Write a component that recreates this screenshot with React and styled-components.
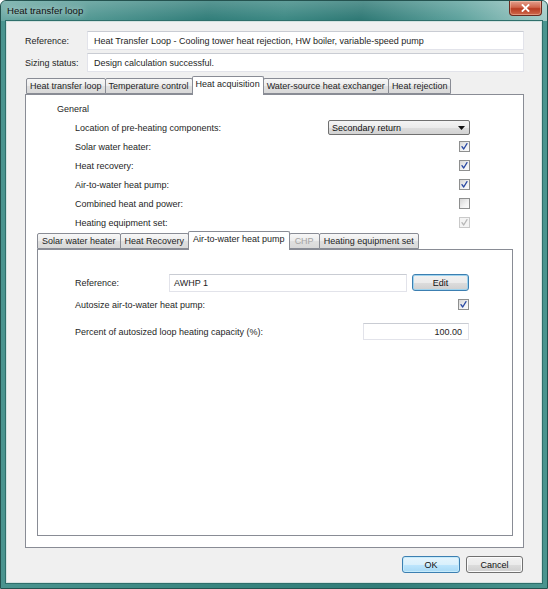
import styled, { createGlobalStyle } from 'styled-components'

const GlobalStyle = createGlobalStyle`
  html, body {
    margin: 0;
    padding: 0;
    background: #ffffff;
  }
  body {
    font-family: 'Liberation Sans', Arial, sans-serif;
    font-size: 9px;
    color: #1e1e1e;
  }
  * {
    box-sizing: border-box;
  }
`

const mainTabs = [
  { label: 'Heat transfer loop' },
  { label: 'Temperature control' },
  { label: 'Heat acquisition', active: true },
  { label: 'Water-source heat exchanger' },
  { label: 'Heat rejection' },
]

const subTabs = [
  { label: 'Solar water heater' },
  { label: 'Heat Recovery' },
  { label: 'Air-to-water heat pump', active: true },
  { label: 'CHP', disabled: true },
  { label: 'Heating equipment set' },
]

const generalRows = [
  { label: 'Solar water heater:', checked: true },
  { label: 'Heat recovery:', checked: true },
  { label: 'Air-to-water heat pump:', checked: true },
  { label: 'Combined heat and power:', checked: false },
  { label: 'Heating equipment set:', checked: true, disabled: true },
]

const Window = styled.div`
  width: 548px;
  height: 589px;
  display: flex;
  flex-direction: column;
  border: 1px solid #24524f;
  border-radius: 6px 6px 0 0;
  overflow: hidden;
  background: linear-gradient(90deg, #4a948f 0%, #38857f 40%, #327d79 70%, #4a958f 100%);
`

const TitleBar = styled.div`
  height: 20px;
  display: flex;
  align-items: flex-start;
  justify-content: space-between;
  background:
    linear-gradient(180deg, rgba(255, 255, 255, 0.2), rgba(255, 255, 255, 0) 20px),
    linear-gradient(
      100deg,
      #6aa8a3 0%,
      #4d948f 18%,
      #2f7c78 38%,
      #3a8782 52%,
      #2c7773 66%,
      #5ca19c 84%,
      #a4ccc8 100%
    );
`

const Title = styled.span`
  padding: 4px 0 0 6px;
  font-size: 9.6px;
  color: #111;
  text-shadow: 0 0 6px rgba(255, 255, 255, 0.9);
`

const CloseButton = styled.div`
  width: 33px;
  height: 15px;
  margin-right: 5px;
  display: flex;
  align-items: center;
  justify-content: center;
  border: 1px solid #6b2a1f;
  border-top: none;
  border-radius: 0 0 4px 4px;
  background: linear-gradient(180deg, #e3a08e 0%, #d0664c 45%, #b83c22 55%, #cf6a4d 100%);
  box-shadow: inset 0 0 0 1px rgba(255, 220, 200, 0.4);
`

const Client = styled.div`
  flex: 1;
  margin: 0 5px 5px;
  display: flex;
  flex-direction: column;
  padding: 9px 17px 9px 18px;
  background: #f0f0f0;
  border: 1px solid #d4e2e0;
  box-shadow: 0 0 0 1px #2f6f6b;
`

const FieldRow = styled.div`
  display: flex;
  align-items: center;
  height: 19px;
  & + & {
    margin-top: 3px;
  }
`

const FieldLabel = styled.span`
  width: 62px;
  flex-shrink: 0;
`

const TextBox = styled.div`
  flex: 1;
  height: 100%;
  display: flex;
  align-items: center;
  padding-left: 6px;
  background: #ffffff;
  border: 1px solid #e2e3ea;
  border-top-color: #c9ccd3;
  white-space: nowrap;
  overflow: hidden;
`

const TabRow = styled.div`
  display: flex;
  align-items: flex-end;
  height: ${({ first }) => (first ? 18 : 17)}px;
  margin-top: ${({ first }) => (first ? 4 : 0)}px;
  padding-left: ${({ first }) => (first ? 1 : 0)}px;
  position: relative;
  z-index: 1;
`

const Tab = styled.div`
  height: ${({ active }) => (active ? 19 : 16)}px;
  margin-bottom: ${({ active }) => (active ? -1 : 0)}px;
  margin-left: -1px;
  &:first-child {
    margin-left: 0;
  }
  padding: ${({ active, pad }) => (active ? `2px ${pad}px 0` : `0 ${pad}px`)};
  display: flex;
  align-items: ${({ active }) => (active ? 'flex-start' : 'center')};
  white-space: nowrap;
  border: 1px solid #898c95;
  border-bottom: ${({ active }) => (active ? 'none' : '1px solid #898c95')};
  border-radius: 2px 2px 0 0;
  color: ${({ disabled }) => (disabled ? '#a3a3a3' : '#1e1e1e')};
  background: ${({ active }) =>
    active
      ? '#ffffff'
      : 'linear-gradient(180deg, #f7f7f7 0%, #ececec 50%, #e0e0e0 51%, #d9d9d9 100%)'};
  position: relative;
  z-index: ${({ active }) => (active ? 2 : 1)};
`

const Panel = styled.div`
  flex: 1;
  display: flex;
  flex-direction: column;
  background: #ffffff;
  border: 1px solid #898c95;
`

const General = styled.div`
  padding: 8px 53px 0 31px;
`

const GroupTitle = styled.div`
  height: 12px;
  line-height: 12px;
`

const OptionList = styled.div`
  margin-top: 3px;
  padding-left: 18px;
  display: flex;
  flex-direction: column;
`

const OptionRow = styled.div`
  height: 19px;
  display: flex;
  align-items: center;
  justify-content: space-between;
`

const Combo = styled.div`
  width: 142px;
  height: 15px;
  display: flex;
  align-items: center;
  justify-content: space-between;
  padding: 0 4px 0 3px;
  border: 1px solid #707070;
  border-radius: 2px;
  background: linear-gradient(180deg, #f4f4f4 0%, #ebebeb 50%, #dddddd 51%, #d2d2d2 100%);
  color: #111;
`

const Check = styled.div`
  width: 11px;
  height: 11px;
  display: flex;
  align-items: center;
  justify-content: center;
  border: 1px solid ${({ disabled }) => (disabled ? '#c9c9c9' : '#8e8f8f')};
  background: ${({ disabled }) =>
    disabled ? '#f4f4f4' : 'linear-gradient(135deg, #d6d6d6 0%, #f2f2f2 60%, #fbfbfb 100%)'};
`

const SubArea = styled.div`
  flex: 1;
  display: flex;
  flex-direction: column;
  margin: 0 10px 11px 11px;
`

const SubPanel = styled.div`
  flex: 1;
  padding: 24px 43px 0 37px;
  border: 1px solid #898c95;
  background: #ffffff;
`

const SubRow = styled.div`
  display: flex;
  align-items: center;
  justify-content: ${({ spread }) => (spread ? 'space-between' : 'flex-start')};
  height: 17px;
  margin-top: ${({ gap }) => gap || 0}px;
`

const SubLabel = styled.span`
  width: 94px;
  flex-shrink: 0;
`

const RefBox = styled.div`
  flex: 1;
  height: 18px;
  display: flex;
  align-items: center;
  padding-left: 4px;
  border: 1px solid #e2e3ea;
  border-top-color: #c9ccd3;
  background: #ffffff;
`

const NumberBox = styled.div`
  width: 106px;
  height: 17px;
  display: flex;
  align-items: center;
  justify-content: flex-end;
  padding-right: 6px;
  border: 1px solid #e2e3ea;
  border-top-color: #c9ccd3;
  background: #ffffff;
`

const Button = styled.div`
  width: ${({ width }) => width}px;
  height: 17px;
  margin-left: ${({ variant }) => (variant === 'focus' ? 5 : 0)}px;
  display: flex;
  align-items: center;
  justify-content: center;
  border-radius: 3px;
  color: #111;
  border: 1px solid ${({ variant }) => (variant ? '#3c7fb1' : '#707070')};
  box-shadow: ${({ variant }) =>
    variant === 'focus'
      ? 'inset 0 0 0 1px #9fd3ee'
      : variant === 'default'
        ? 'inset 0 0 0 1px #c6ebfb'
        : 'inset 0 0 0 1px #fbfbfb'};
  background: ${({ variant }) =>
    variant === 'default'
      ? 'linear-gradient(180deg, #e6f5fd 0%, #d9f0fc 50%, #bee6fd 51%, #a7d9f5 100%)'
      : 'linear-gradient(180deg, #f2f2f2 0%, #ebebeb 50%, #dddddd 51%, #cfcfcf 100%)'};
`

const ButtonBar = styled.div`
  display: flex;
  justify-content: flex-end;
  gap: 6px;
  margin-top: 8px;
  padding-right: 1px;
`

function CheckBox({ checked, disabled }) {
  return (
    <Check disabled={disabled}>
      {checked && (
        <svg width="9" height="9" viewBox="0 0 9 9">
          <path
            d="M2 4.6 L3.7 7 L7 1.6"
            fill="none"
            stroke={disabled ? '#b8b8b8' : '#2b4aa3'}
            strokeWidth="1.3"
            strokeLinecap="round"
            strokeLinejoin="round"
          />
        </svg>
      )}
    </Check>
  )
}

// main strip has tighter tabs than the nested one
function TabStrip({ tabs, first }) {
  return (
    <TabRow first={first}>
      {tabs.map(tab => (
        <Tab
          key={tab.label}
          active={tab.active}
          disabled={tab.disabled}
          pad={first ? 3 : tab.disabled ? 5 : 4}
        >
          {tab.label}
        </Tab>
      ))}
    </TabRow>
  )
}

function App() {
  return (
    <>
      <GlobalStyle />
      <Window>
        <TitleBar>
          <Title>Heat transfer loop</Title>
          <CloseButton>
            <svg width="9" height="8" viewBox="0 0 9 8">
              <path
                d="M1.5 1 L7.5 7 M7.5 1 L1.5 7"
                stroke="#ffffff"
                strokeWidth="1.8"
                strokeLinecap="square"
              />
            </svg>
          </CloseButton>
        </TitleBar>

        <Client>
          <FieldRow>
            <FieldLabel>Reference:</FieldLabel>
            <TextBox>
              Heat Transfer Loop - Cooling tower heat rejection, HW boiler, variable-speed pump
            </TextBox>
          </FieldRow>
          <FieldRow>
            <FieldLabel>Sizing status:</FieldLabel>
            <TextBox>Design calculation successful.</TextBox>
          </FieldRow>

          <TabStrip tabs={mainTabs} first />
          <Panel>
            <General>
              <GroupTitle>General</GroupTitle>
              <OptionList>
                <OptionRow>
                  <span>Location of pre-heating components:</span>
                  <Combo>
                    <span>Secondary return</span>
                    <svg width="7" height="4" viewBox="0 0 7 4">
                      <path d="M0 0 H7 L3.5 4 Z" fill="#111" />
                    </svg>
                  </Combo>
                </OptionRow>
                {generalRows.map(row => (
                  <OptionRow key={row.label}>
                    <span>{row.label}</span>
                    <CheckBox checked={row.checked} disabled={row.disabled} />
                  </OptionRow>
                ))}
              </OptionList>
            </General>

            <SubArea>
              <TabStrip tabs={subTabs} />
              <SubPanel>
                <SubRow>
                  <SubLabel>Reference:</SubLabel>
                  <RefBox>AWHP 1</RefBox>
                  <Button variant="focus" width={57}>
                    Edit
                  </Button>
                </SubRow>
                <SubRow gap={5} spread>
                  <span>Autosize air-to-water heat pump:</span>
                  <CheckBox checked />
                </SubRow>
                <SubRow gap={10} spread>
                  <span>Percent of autosized loop heating capacity (%):</span>
                  <NumberBox>100.00</NumberBox>
                </SubRow>
              </SubPanel>
            </SubArea>
          </Panel>

          <ButtonBar>
            <Button variant="default" width={58}>
              OK
            </Button>
            <Button width={57}>Cancel</Button>
          </ButtonBar>
        </Client>
      </Window>
    </>
  )
}

export default App
